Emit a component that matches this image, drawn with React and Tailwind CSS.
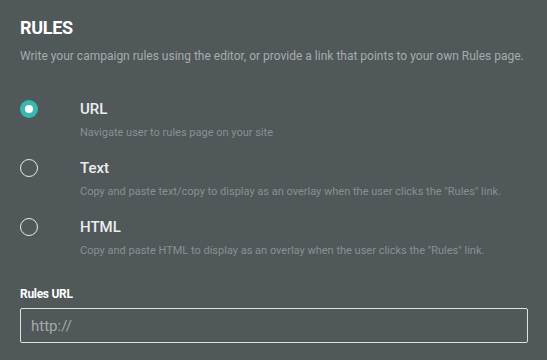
import React from 'react';

const options = [
  { id: 'url', label: 'URL', desc: 'Navigate user to rules page on your site', checked: true },
  { id: 'text', label: 'Text', desc: 'Copy and paste text/copy to display as an overlay when the user clicks the "Rules" link.' },
  { id: 'html', label: 'HTML', desc: 'Copy and paste HTML to display as an overlay when the user clicks the "Rules" link.' },
];

function Radio({ checked }) {
  if (checked) {
    return (
      <div className="w-[18px] h-[18px] rounded-full bg-[#36b9b2] flex items-center justify-center">
        <div className="w-[8px] h-[8px] rounded-full bg-white" />
      </div>
    );
  }
  return <div className="w-[18px] h-[18px] rounded-full border border-[#e6e8e8]" />;
}

export default function App() {
  return (
    <div className="w-[547px] h-[360px] bg-[#50585a] px-[20px] pt-[17px] font-['Roboto',sans-serif]">
      <h1 className="text-[18px] leading-[22px] font-bold text-white tracking-[-0.3px]">RULES</h1>
      <p className="mt-[9px] text-[12px] leading-[16px] text-[#a6abac] whitespace-nowrap">
        Write your campaign rules using the editor, or provide a link that points to your own Rules page.
      </p>

      <div className="mt-[35px] flex flex-col gap-[18px]">
        {options.map((o) => (
          <div key={o.id} className="flex">
            <div className="w-[60px] pt-[1px]">
              <Radio checked={o.checked} />
            </div>
            <div>
              <div className="text-[15px] leading-[20px] font-medium text-[#eceeee]">{o.label}</div>
              <div className="mt-[7px] text-[11px] leading-[14px] text-[#899092]">{o.desc}</div>
            </div>
          </div>
        ))}
      </div>

      <label className="block mt-[29px] text-[12px] leading-[15px] font-bold text-white tracking-[-0.3px]">Rules URL</label>
      <input
        placeholder="http://"
        className="mt-[6px] w-[508px] h-[35px] border border-[#dfe2e2] rounded-[2px] bg-transparent px-[10px] text-[15px] text-white placeholder:text-[#a3a8a9] outline-none"
      />
    </div>
  );
}
